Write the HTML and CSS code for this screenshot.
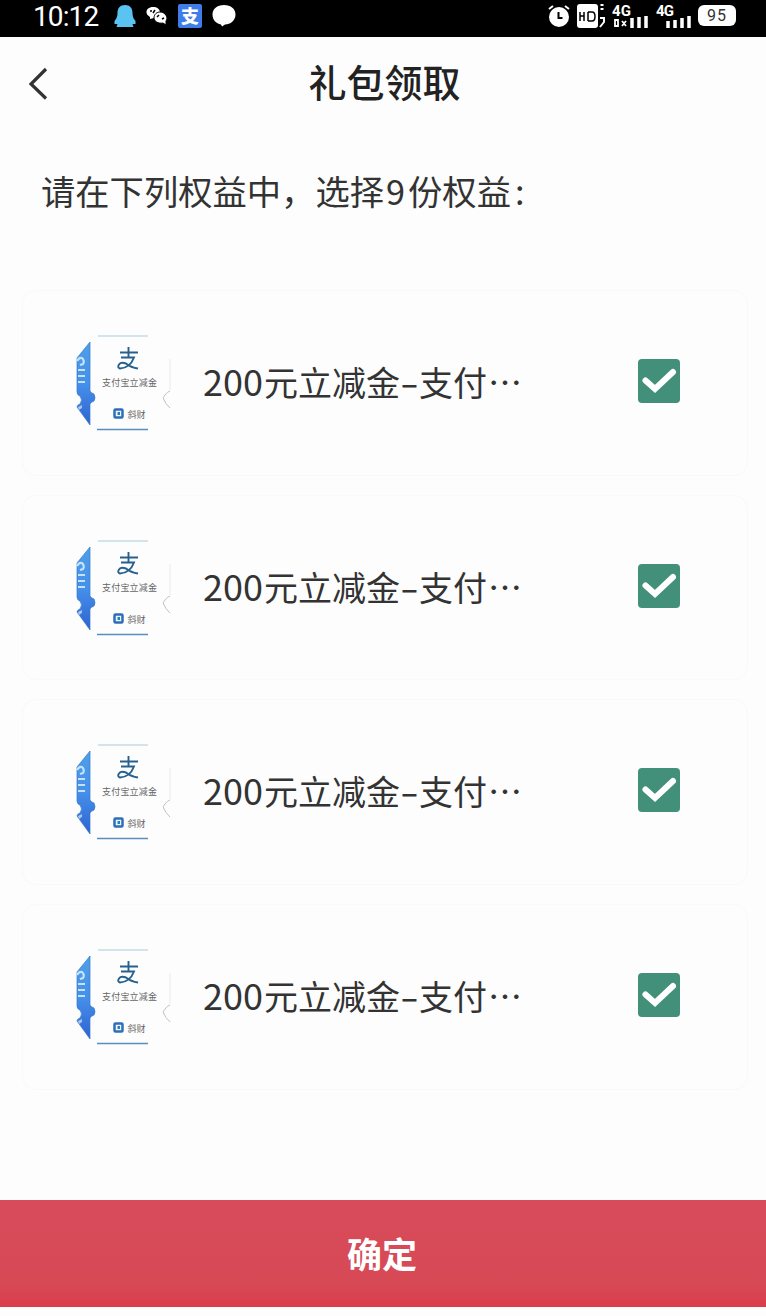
FILE: index.html
```html
<!DOCTYPE html>
<html lang="zh-CN">
<head>
    <meta charset="UTF-8">
    <meta name="viewport" content="width=device-width, initial-scale=1.0">
    <title>礼包领取</title>
    <link rel="stylesheet" href="styles.css">
</head>
<body>
    <!-- shared icons -->
    <svg class="sprite" aria-hidden="true">
        <defs>
            <linearGradient id="ticketBlue" x1="0" y1="0" x2="0" y2="1">
                <stop offset="0" stop-color="#4f9fe8"/>
                <stop offset="0.5" stop-color="#4590ea"/>
                <stop offset="1" stop-color="#2f62d2"/>
            </linearGradient>
        </defs>
        <symbol id="ticket" viewBox="0 0 100 100">
            <path d="M16 8V57Q17 59 20 60 22 64 20 67 17 68 16 70V91L3 73Q3 71 6 70 9 66 6 62 3 61 3 58V24Z" fill="url(#ticketBlue)" stroke="#3479c8" stroke-width="0.700"/>
            <path d="M3 27q2-4 5-3 3 3 1 6l-3 1M4 36h7M4 42h7M4 48h7" fill="none" stroke="#c4e2fa" stroke-width="2.200"/>
            <path d="M4 73l4-2v3l-3 2Z" fill="#a9c8ef"/>
            <path d="M24 2h50" stroke="#a9cbd9" stroke-width="1"/>
            <path d="M23 95.500h51" stroke="#5a8fbd" stroke-width="1.300"/>
            <path d="M96 25v31" stroke="#e9eaea" stroke-width="1"/>
            <path d="M96 57q-3 1-5 4-3 3-1 5 1 3 6 8" fill="none" stroke="#bfc1c3" stroke-width="1"/>
            <path d="M46 18.500h18M54.500 13v10M47 23.500h13Q56 34 46 34.500q-3-1-1-4 2-3 7-1 5 4 12 5" fill="none" stroke="#26608f" stroke-width="1.900"/>
            <rect x="40.500" y="75.500" width="8" height="8" rx="1" fill="#eaf7ff" stroke="#2c6fb7" stroke-width="2.500"/>
            <path d="M43.500 78h2.500v3h-2.500z" fill="#3479b8"/>
        </symbol>
        <symbol id="check" viewBox="0 0 42 44">
            <rect width="42" height="44" rx="4" fill="#42907a"/>
            <path d="M7.500 21.500l9.500 8.500L35 13" fill="none" stroke="#fff" stroke-width="6" stroke-linecap="round"/>
        </symbol>
    </svg>

    <div class="status-bar">
        <div class="status-left">
            <span class="time">10:12</span>
            <svg width="22" height="24" viewBox="0 0 22 24"><path d="M11 1c5 0 7.500 3 7.500 8 0 3 .5 5 3 8v3h-3l1 3H2.500l1-3h-3v-3c2.500-3 3-5 3-8C3.500 4 6 1 11 1z" fill="#5bc3f1"/></svg>
            <svg class="wechat" width="22" height="20" viewBox="0 0 22 20">
                <path d="M7 1c4 0 7 2 7 5.500S11 12 8 12l-4 1v-2C-2 8 0 1 7 1z" fill="#fff"/>
                <path d="M14 6c4 0 7 3 7 7l-1 2v4l-3-2c-5 1-9-2-9-5 0-4 3-6 6-6z" fill="#fff" stroke="#000" stroke-width="1"/>
                <path d="M4 5h2M9 4l-2 3M11 11l2-2M16 13l2-1" stroke="#000" stroke-width="1.500"/>
            </svg>
            <span class="pay-badge">支</span>
            <svg width="24" height="22" viewBox="0 0 24 22"><path d="M12 0c7 0 11.500 4 11.500 9.500 0 6-5 10-10.500 10l-3 2-1-2C4 18.500.5 15 .5 9.500S5 0 12 0z" fill="#fff"/></svg>
        </div>
        <div class="status-right">
            <svg width="22" height="24" viewBox="0 0 22 24">
                <circle cx="11" cy="13" r="10" fill="#fff"/>
                <path d="M1 5l4-3M17 2l4 3" stroke="#fff" stroke-width="2"/>
                <path d="M10.500 8v6h4" fill="none" stroke="#000" stroke-width="2"/>
            </svg>
            <svg width="30" height="26" viewBox="0 0 30 26">
                <rect x="1" y="1" width="21" height="24" rx="3" fill="#fff"/>
                <path d="M4 9v9M8 9v9M4 13h4M12 9v9M12 9h4q3 0 3 4.500T16 18h-4" fill="none" stroke="#000" stroke-width="1.500"/>
                <path d="M24.500 2h3M24.500 6h3M24 15h4v4l-4 5" fill="none" stroke="#fff" stroke-width="2"/>
            </svg>
            <svg width="38" height="26" viewBox="0 0 38 26">
                <text x="0" y="13" class="network" textLength="19">4G</text>
                <path d="M3 17h3v6H3zM10 18l4 5M14 18l-4 5" fill="none" stroke="#fff" stroke-width="1.800"/>
                <path d="M20 15v10M27 14v11M34 13v12" stroke="#fff" stroke-width="3.500"/>
            </svg>
            <svg width="36" height="26" viewBox="0 0 36 26">
                <text x="0" y="13" class="network" textLength="18">4G</text>
                <path d="M12 18v7M19 17v8M26 15v10M33 13v12" stroke="#fff" stroke-width="3.500"/>
            </svg>
            <span class="battery">95</span>
        </div>
    </div>

    <header class="nav-header">
        <svg class="back" width="20" height="34" viewBox="0 0 20 34"><path d="M18 2L3 17l15 14.500" fill="none" stroke="#333" stroke-width="3.200"/></svg>
        <h1>礼包领取</h1>
    </header>

    <main class="content">
        <p class="tip">请在下列权益中，选择<span class="num">9</span>份权益<span class="colon">:</span></p>
        <ul class="gift-list">
            <li class="gift">
                <svg class="ticket" viewBox="0 0 100 100">
                    <use href="#ticket"/>
                    <text x="28" y="51.500" textLength="55">支付宝立减金</text>
                    <text x="53.500" y="83.500" textLength="18">斜财</text>
                </svg>
                <span class="gift-name"><span class="amount">200</span>元立减金<span class="dash">-</span>支付<span class="dots">⋯</span></span>
                <svg class="check"><use href="#check"/></svg>
            </li>
            <li class="gift">
                <svg class="ticket" viewBox="0 0 100 100">
                    <use href="#ticket"/>
                    <text x="28" y="51.500" textLength="55">支付宝立减金</text>
                    <text x="53.500" y="83.500" textLength="18">斜财</text>
                </svg>
                <span class="gift-name"><span class="amount">200</span>元立减金<span class="dash">-</span>支付<span class="dots">⋯</span></span>
                <svg class="check"><use href="#check"/></svg>
            </li>
            <li class="gift">
                <svg class="ticket" viewBox="0 0 100 100">
                    <use href="#ticket"/>
                    <text x="28" y="51.500" textLength="55">支付宝立减金</text>
                    <text x="53.500" y="83.500" textLength="18">斜财</text>
                </svg>
                <span class="gift-name"><span class="amount">200</span>元立减金<span class="dash">-</span>支付<span class="dots">⋯</span></span>
                <svg class="check"><use href="#check"/></svg>
            </li>
            <li class="gift">
                <svg class="ticket" viewBox="0 0 100 100">
                    <use href="#ticket"/>
                    <text x="28" y="51.500" textLength="55">支付宝立减金</text>
                    <text x="53.500" y="83.500" textLength="18">斜财</text>
                </svg>
                <span class="gift-name"><span class="amount">200</span>元立减金<span class="dash">-</span>支付<span class="dots">⋯</span></span>
                <svg class="check"><use href="#check"/></svg>
            </li>
        </ul>
    </main>

    <button class="confirm" type="button">确定</button>
</body>
</html>
```
FILE: styles.css
```css
* {
    box-sizing: border-box;
}
body {
    margin: 0;
    height: 1316px;
    padding-bottom: 9px;
    display: flex;
    flex-direction: column;
    background: #fdfdfd;
    color: #333;
    font-family: "Noto Sans CJK SC", sans-serif;
    overflow: hidden;
}
svg {
    display: block;
    flex-shrink: 0;
}
.sprite {
    position: absolute;
    width: 0;
    height: 0;
}

/* status bar */
.status-bar {
    height: 37px;
    flex-shrink: 0;
    background: #000;
    color: #fff;
    display: flex;
    justify-content: space-between;
    padding: 0 30px 6px 33px;
}
.status-left,
.status-right {
    display: flex;
    align-items: center;
}
.status-left {
    gap: 10px;
}
.time {
    width: 71px;
    font-family: Roboto, sans-serif;
    font-size: 28px;
    line-height: 31px;
    letter-spacing: -0.9px;
    padding-top: 2px;
}
.pay-badge {
    width: 24px;
    height: 24px;
    border-radius: 2px;
    background: #3f7de8;
    font-size: 18px;
    font-weight: 900;
    line-height: 23px;
    text-align: center;
}
.status-right {
    gap: 6px;
}
.network {
    font-family: Roboto, sans-serif;
    font-size: 15px;
    font-weight: 700;
    fill: #fff;
}
.battery {
    width: 38px;
    height: 21px;
    border-radius: 6px;
    background: #fff;
    color: #333;
    font-family: Roboto, sans-serif;
    font-size: 16px;
    line-height: 22px;
    text-align: center;
    letter-spacing: 1px;
}

/* page header */
.nav-header {
    height: 90px;
    flex-shrink: 0;
    display: grid;
    grid-template-columns: 100px 1fr 100px;
    align-items: center;
}
.back {
    margin: 4px 0 0 28px;
}
.nav-header h1 {
    margin: 0;
    text-align: center;
    font-size: 38px;
    line-height: 50px;
    font-weight: 500;
    color: #222;
    padding: 0 0 2px 3px;
}

.content {
    flex: 1;
    padding: 0 18px 0 22px;
}
.tip {
    margin: 0;
    height: 163px;
    padding: 38px 0 0 19px;
    font-size: 34.3px;
    line-height: 50px;
    white-space: nowrap;
}
.num {
    margin: 0 3px 0 2px;
}
.colon {
    margin-left: 4px;
}
.gift-list {
    margin: 0;
    padding: 0;
    list-style: none;
    display: flex;
    flex-direction: column;
    gap: 19px;
}
.gift {
    height: 185.7px;
    border: 1px solid #faf9f8;
    border-radius: 14px;
    display: flex;
    align-items: center;
    padding: 0 67px 2px 51px;
}
.ticket {
    width: 100px;
    height: 100px;
    margin-top: 4px;
    font-size: 9px;
    fill: #666;
}
.gift-name {
    flex: 1;
    margin-left: 29px;
    font-size: 34px;
    line-height: 50px;
    white-space: nowrap;
}
.amount {
    font-size: 36px;
    line-height: 1;
    margin-right: 1px;
}
.dash {
    display: inline-block;
    width: 19px;
    text-align: center;
    transform: scaleX(1.6);
}
.dots {
    margin-left: 1px;
}
.check {
    width: 42px;
    height: 44px;
    margin-bottom: 2px;
}

.confirm {
    height: 107px;
    flex-shrink: 0;
    border: 0;
    padding: 0 2px 2px 0;
    background: linear-gradient(#d84b5b, #d74955 80%, #dc3c4a);
    color: #fff;
    font-family: inherit;
    font-size: 35px;
    font-weight: 700;
    cursor: pointer;
}
```
